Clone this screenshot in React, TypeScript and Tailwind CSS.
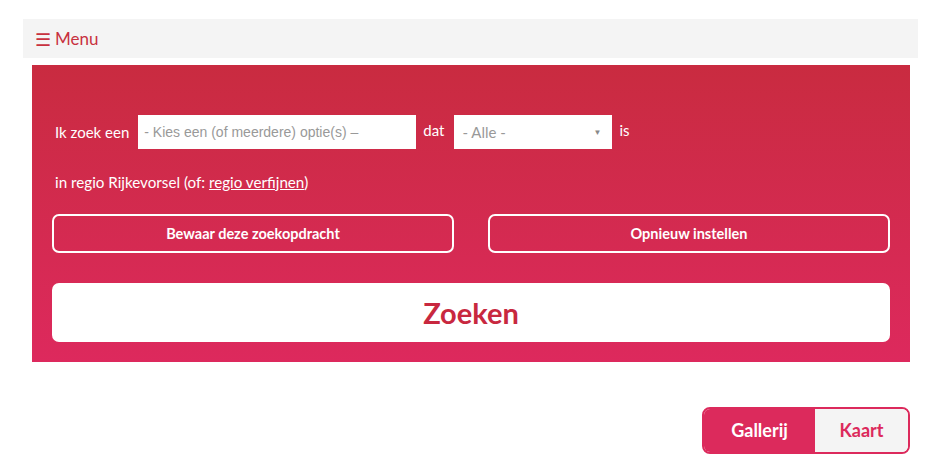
import React from 'react';

const App: React.FC = () => {
  return (
    <div className="w-[943px] h-[474px] bg-white font-['Lato','Open_Sans',sans-serif] overflow-hidden">
      <div className="pt-[19px] pl-[23px]">
        <div className="w-[895px] h-[39px] bg-[#f4f4f4] flex items-center pl-[12px] text-[17px] text-[#c8313f]">
          <span className="mr-[4px] text-[18px] leading-none">☰</span>
          <span>Menu</span>
        </div>
      </div>

      <div className="ml-[32px] mt-[7px] w-[878px] bg-gradient-to-b from-[#c92b40] to-[#dd295d] pt-[50px] pb-[20px] px-[20px]">
        <div className="flex items-center h-[34px] pl-[3px] text-white text-[15px]">
          <span className="mr-[9px]">Ik zoek een</span>
          <div className="w-[278px] h-[34px] bg-white flex items-center px-[6px] text-[14px] text-[#999] font-['Liberation_Sans',sans-serif]">
            - Kies een (of meerdere) optie(s) –
          </div>
          <span className="ml-[7px] mr-[10px] -mt-[4px]">dat</span>
          <div className="w-[158px] h-[34px] bg-white flex items-center justify-between px-[8px] text-[15px] text-[#999]">
            <span>- Alle -</span>
            <span className="text-[8px] text-[#888] mr-[3px]">▼</span>
          </div>
          <span className="ml-[7px] -mt-[4px]">is</span>
        </div>

        <div className="mt-[23px] h-[20px] pl-[3px] flex items-center text-white text-[15.2px]">
          in regio Rijkevorsel (of:&nbsp;<span className="underline">regio verfijnen</span>)
        </div>

        <div className="mt-[22px] grid grid-cols-2 gap-[34px]">
          <button className="h-[39px] border-2 border-white rounded-[7px] text-white text-[14.5px] font-bold">
            Bewaar deze zoekopdracht
          </button>
          <button className="h-[39px] border-2 border-white rounded-[7px] text-white text-[14.5px] font-bold">
            Opnieuw instellen
          </button>
        </div>

        <button className="mt-[30px] w-full h-[59px] bg-white rounded-[7px] text-[#c8283f] text-[29px] font-bold">
          Zoeken
        </button>
      </div>

      <div className="flex justify-end pr-[33px] mt-[45px]">
        <div className="flex w-[208px] h-[47px] rounded-[8px] border-2 border-[#dc2a5c] overflow-hidden text-[18px] font-bold">
          <div className="w-[111px] bg-[#dc2a5c] text-white flex items-center justify-center">Gallerij</div>
          <div className="flex-1 bg-[#f4f4f4] text-[#dc2a5c] flex items-center justify-center">Kaart</div>
        </div>
      </div>
    </div>
  );
};

export default App;
